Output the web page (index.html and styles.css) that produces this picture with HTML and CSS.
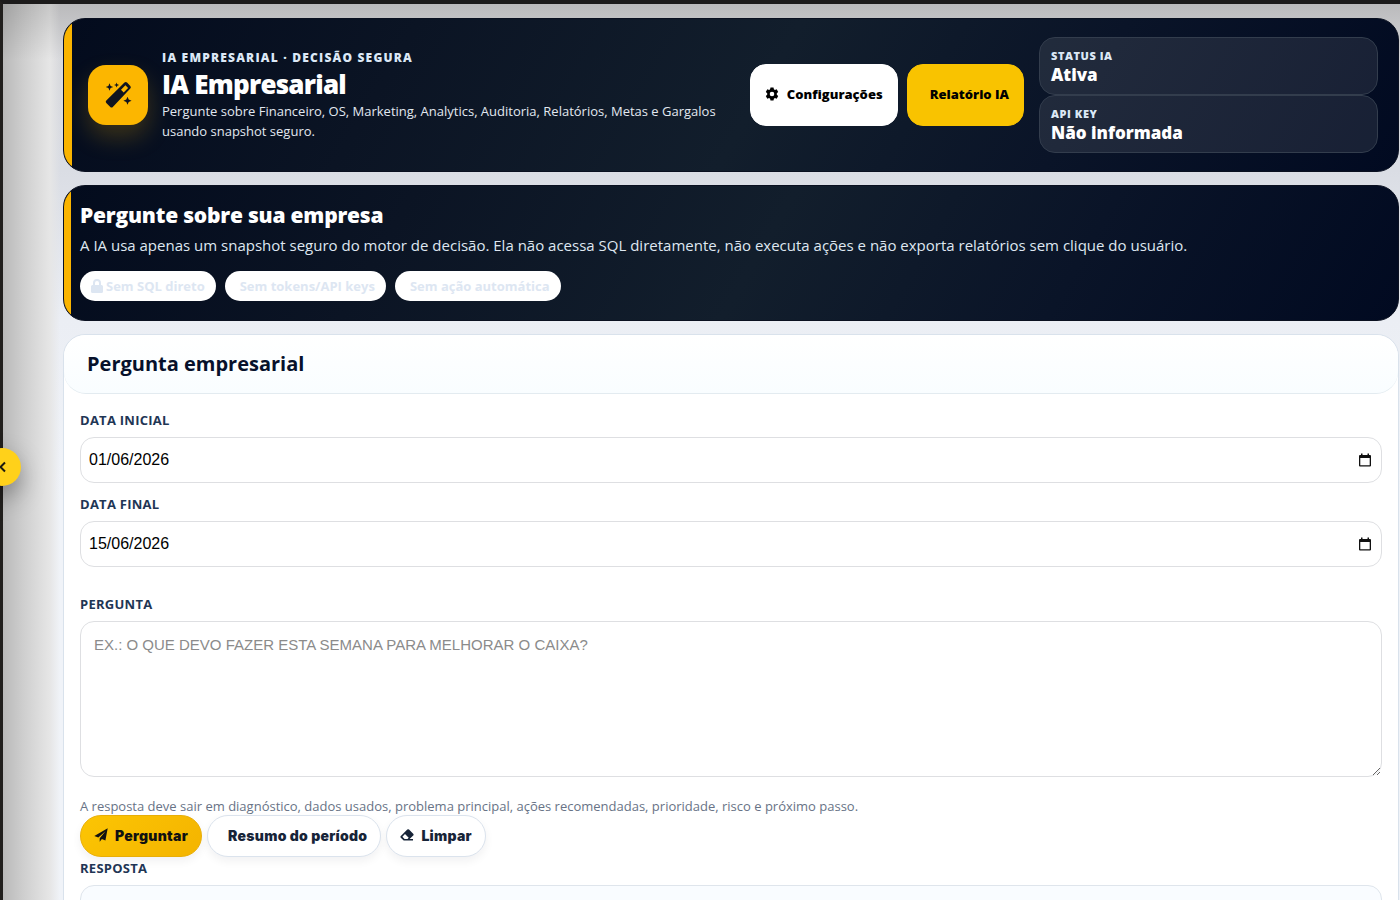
FILE: index.html
```html
<!DOCTYPE html>
<html lang="pt-BR">
<head>
  <meta charset="UTF-8" />
  <meta name="viewport" content="width=device-width, initial-scale=1.0" />
  <title>IA Empresarial</title>
  <link rel="stylesheet" href="styles.css">
</head>
<body>
  <button class="sidebar-toggle" type="button" aria-label="Abrir menu">
    <svg viewBox="0 0 10 12" width="10" height="12" fill="none" stroke="currentColor" stroke-width="2"><path d="M8 1.500 3.500 6 8 10.500"/></svg>
  </button>

  <main class="page">
    <header class="hero">
      <div class="hero-icon">
        <svg viewBox="0 0 28 28" width="28" height="28" fill="currentColor">
          <path fill-rule="evenodd" d="M20.500 1.600a1.800 1.800 0 0 1 2.500 0l3.300 3.300a1.800 1.800 0 0 1 0 2.500L8.800 25.900a1.800 1.800 0 0 1-2.500 0l-4-4a1.800 1.800 0 0 1 0-2.500ZM21.400 4.300l-4.400 4.400 2.700 2.700 4.400-4.400Z"/>
          <path d="m5.500 2.200 1.100 2.700 2.700 1.100-2.700 1.100-1.100 2.700-1.100-2.700L1.700 6l2.700-1.100ZM12.600 1.500l.7 1.800 1.800.7-1.800.7-.7 1.800-.7-1.800-1.800-.7 1.800-.7Zm10.900 14.200 1.200 2.900 2.900 1.100-2.900 1.200-1.200 2.900-1.200-2.900-2.900-1.200 2.900-1.100Z"/>
        </svg>
      </div>
      <div class="hero-text">
        <span class="kicker">IA EMPRESARIAL · DECISÃO SEGURA</span>
        <h1>IA Empresarial</h1>
        <p>Pergunte sobre Financeiro, OS, Marketing, Analytics, Auditoria, Relatórios, Metas e Gargalos usando snapshot seguro.</p>
      </div>
      <div class="hero-actions">
        <a class="hero-btn" href="#configuracoes">
          <svg viewBox="0 0 14 14" width="14" height="14"><path fill="currentColor" fill-rule="evenodd" d="M5.500.5h3l.4 1.800 1 .6 1.800-.6 1.500 2.600-1.400 1.300v1.600l1.400 1.300-1.500 2.600-1.800-.6-1 .6-.4 1.800h-3l-.4-1.800-1-.6-1.800.6L.8 9.100l1.400-1.300V6.200L.8 4.900l1.500-2.600 1.800.6 1-.6ZM7 4.700a2.300 2.300 0 1 0 0 4.600 2.300 2.300 0 0 0 0-4.600Z"/></svg>
          Configurações
        </a>
        <a class="hero-btn hero-btn-primary" href="#relatorio"><i class="no-icon"></i>Relatório IA</a>
      </div>
      <div class="hero-status">
        <div class="status-card"><span>STATUS IA</span><strong>Ativa</strong></div>
        <div class="status-card"><span>API KEY</span><strong>Não informada</strong></div>
      </div>
    </header>

    <section class="intro">
      <h2>Pergunte sobre sua empresa</h2>
      <p>A IA usa apenas um snapshot seguro do motor de decisão. Ela não acessa SQL diretamente, não executa ações e não exporta relatórios sem clique do usuário.</p>
      <div class="chips">
        <span class="chip">
          <svg viewBox="0 0 12 14" width="12" height="14" fill="currentColor"><path fill-rule="evenodd" d="M2 6V4a4 4 0 0 1 8 0v2h.500A1.500 1.500 0 0 1 12 7.500v5a1.500 1.500 0 0 1-1.500 1.500h-9A1.500 1.500 0 0 1 0 12.500v-5A1.500 1.500 0 0 1 1.500 6Zm2 0h4V4a2 2 0 0 0-4 0Z"/></svg>Sem SQL direto
        </span>
        <span class="chip chip-blank">Sem tokens/API keys</span>
        <span class="chip chip-blank">Sem ação automática</span>
      </div>
    </section>

    <section class="panel">
      <div class="panel-head"><h2>Pergunta empresarial</h2></div>
      <form class="panel-body">
        <label for="dataInicial">DATA INICIAL</label>
        <div class="date-field">
          <input id="dataInicial" type="text" inputmode="numeric" value="01/06/2026">
          <button type="button" aria-label="Escolher data inicial">
            <svg viewBox="0 0 14 14" width="14" height="14" fill="currentColor"><path fill-rule="evenodd" d="M3 .5h1.500V2h5V.5H11V2h1a1 1 0 0 1 1 1v9.500a1 1 0 0 1-1 1H2a1 1 0 0 1-1-1V3a1 1 0 0 1 1-1h1ZM2.300 5v7.200h9.400V5Z"/></svg>
          </button>
        </div>
        <label for="dataFinal">DATA FINAL</label>
        <div class="date-field">
          <input id="dataFinal" type="text" inputmode="numeric" value="15/06/2026">
          <button type="button" aria-label="Escolher data final">
            <svg viewBox="0 0 14 14" width="14" height="14" fill="currentColor"><path fill-rule="evenodd" d="M3 .5h1.500V2h5V.5H11V2h1a1 1 0 0 1 1 1v9.500a1 1 0 0 1-1 1H2a1 1 0 0 1-1-1V3a1 1 0 0 1 1-1h1ZM2.300 5v7.200h9.400V5Z"/></svg>
          </button>
        </div>
        <label class="question-label" for="pergunta">PERGUNTA</label>
        <textarea id="pergunta" placeholder="EX.: O QUE DEVO FAZER ESTA SEMANA PARA MELHORAR O CAIXA?"></textarea>
        <p class="hint">A resposta deve sair em diagnóstico, dados usados, problema principal, ações recomendadas, prioridade, risco e próximo passo.</p>
        <div class="form-actions">
          <button class="btn btn-primary" type="submit">
            <svg viewBox="0 0 14 14" width="14" height="14" fill="currentColor"><path d="M13.700.3 11.400 12.600 7.900 11.100 5.700 13.700V10.200L11.500 3.200 4.300 9.500.3 7.900Z"/></svg>
            Perguntar
          </button>
          <button class="btn" type="button"><i class="no-icon"></i>Resumo do período</button>
          <button class="btn" type="reset">
            <svg viewBox="0 0 14 14" width="14" height="14" fill="currentColor"><path fill-rule="evenodd" d="M7.300 1.600a1.200 1.200 0 0 1 1.700 0l4.200 4.200a1.200 1.200 0 0 1 0 1.700L9.600 11.100H13v1.500H3.700L.8 9.700a1.200 1.200 0 0 1 0-1.700ZM5 6.100 2.400 8.800l2.200 2.300h2.900l1.200-1.300Z"/></svg>
            Limpar
          </button>
        </div>
        <label class="answer-label" for="resposta">RESPOSTA</label>
        <output class="answer" id="resposta"></output>
      </form>
    </section>
  </main>
</body>
</html>
```
FILE: styles.css
```css
* {
  box-sizing: border-box;
}

body {
  margin: 0;
  min-height: 100vh;
  overflow-x: hidden;
  border-top: 4px solid #1c1b1b;
  border-left: 3px solid #211f1d;
  font-family: "Open Sans", "Noto Sans", sans-serif;
  color: #07112b;
  background:
    linear-gradient(to bottom, rgba(0, 0, 0, 0.14), transparent 60px) 0 0 / 100% 60px no-repeat,
    linear-gradient(to right, #b6b6b6, #cfcfcf 24px, #e6e6e6 50px, rgba(230, 232, 236, 0) 60px),
    linear-gradient(to bottom, #d6d6d8, #dadde4 170px, #ebeef4 320px, #f0f3f8 500px);
}

h1, h2, p {
  margin: 0;
}

svg {
  display: block;
  flex: none;
}

.page {
  padding: 14px 1px 24px 60px;
}

.sidebar-toggle {
  position: fixed;
  left: -17px;
  top: 448px;
  z-index: 2;
  display: flex;
  align-items: center;
  justify-content: flex-end;
  width: 38px;
  height: 38px;
  padding: 0 14px 0 0;
  border: 0;
  border-radius: 50%;
  color: #1b1a10;
  background: #ffd11a;
  box-shadow: 0 10px 24px rgba(0, 0, 0, 0.35);
}

/* Dark cards at the top */
.hero, .intro {
  position: relative;
  overflow: hidden;
  border: 1px solid #0a1020;
  border-radius: 22px;
  color: #fff;
  background: linear-gradient(120deg, #030b1d, #0b1424 25%, #121e2c 52%, #0a1428 75%, #010a21);
}

.hero::before, .intro::before {
  content: "";
  position: absolute;
  left: 0;
  top: 0;
  bottom: 0;
  width: 8px;
  background: #fab400;
}

.hero {
  display: flex;
  align-items: center;
  gap: 14px;
  min-height: 154px;
  padding: 17px 20px 18px 24px;
}

.hero-icon {
  display: flex;
  align-items: center;
  justify-content: center;
  flex: none;
  width: 60px;
  height: 60px;
  border-radius: 18px;
  color: #10141f;
  background: #fcb600;
  box-shadow: 0 12px 24px rgba(250, 180, 0, 0.22);
}

.hero-text {
  flex: 1;
  min-width: 0;
}

.kicker {
  display: block;
  font-size: 12px;
  line-height: 18px;
  font-weight: 800;
  letter-spacing: 0.1em;
  color: #dce8f6;
}

.hero h1 {
  font-size: 26px;
  line-height: 34px;
  font-weight: 800;
  letter-spacing: -0.03em;
}

.hero p {
  font-size: 13px;
  line-height: 20px;
  color: #e2e8f0;
}

.hero-actions {
  display: flex;
  gap: 9px;
  margin-right: 1px;
}

.hero-btn {
  display: flex;
  align-items: center;
  gap: 8px;
  height: 62px;
  padding: 0 14px 2px;
  border: 1px solid #fff;
  border-radius: 16px;
  font-size: 13px;
  font-weight: 800;
  white-space: nowrap;
  text-decoration: none;
  color: #000;
  background: #fff;
}

.hero-btn-primary {
  border-color: #f9c300;
  background: #f9c300;
}

.no-icon {
  width: 0;
}

.hero-status {
  flex: none;
  width: 339px;
}

.status-card {
  padding: 10px 11px 8px;
  border: 1px solid #333d4d;
  border-radius: 16px;
  background: rgba(255, 255, 255, 0.09);
}

.status-card span {
  display: block;
  font-size: 11px;
  line-height: 16px;
  font-weight: 800;
  letter-spacing: 0.05em;
  color: #dce8f6;
}

.status-card strong {
  display: block;
  font-size: 17px;
  line-height: 22px;
  font-weight: 800;
}

.intro {
  margin-top: 13px;
  padding: 14px 16px 19px;
}

.intro::before {
  width: 7px;
}

.intro h2 {
  font-size: 21px;
  line-height: 30px;
  font-weight: 800;
  letter-spacing: -0.01em;
}

.intro p {
  margin-top: 3px;
  font-size: 15px;
  line-height: 24px;
  color: #dfe7f1;
}

.chips {
  display: flex;
  flex-wrap: wrap;
  gap: 9px;
  margin-top: 14px;
}

.chip {
  display: flex;
  align-items: center;
  gap: 3px;
  height: 30px;
  padding: 0 11px;
  border-radius: 15px;
  font-size: 13px;
  font-weight: 700;
  color: #dde6f2;
  background: #fff;
}

.chip-blank {
  padding-left: 15px;
}

/* Question form */
.panel {
  margin-top: 13px;
  border: 1px solid #d9e2ec;
  border-radius: 22px;
  background: #fff;
}

.panel-head {
  padding: 14px 23px;
  border-bottom: 1px solid #e3ebf0;
  border-radius: 22px;
  background: linear-gradient(#fff, #f9fdff);
}

.panel-head h2 {
  font-size: 20px;
  line-height: 30px;
  font-weight: 700;
}

.panel-body {
  padding: 17px 16px 16px;
}

.panel-body label {
  display: block;
  margin-bottom: 8px;
  font-size: 13px;
  line-height: 18px;
  font-weight: 700;
  letter-spacing: 0.02em;
  color: #1f3655;
}

.date-field {
  display: flex;
  align-items: center;
  height: 46px;
  margin-bottom: 12px;
  padding: 0 9px 0 8px;
  border: 1px solid #dedfe2;
  border-radius: 14px;
  background: #fff;
}

.date-field input {
  flex: 1;
  min-width: 0;
  padding: 0;
  border: 0;
  outline: 0;
  font: 16px "Liberation Sans", Arial, sans-serif;
  color: #000;
  background: none;
}

.date-field button {
  padding: 0;
  border: 0;
  color: #111;
  background: none;
}

.panel-body .question-label {
  margin-top: 28px;
}

.panel-body .answer-label {
  margin-top: 2px;
}

.panel-body textarea {
  display: block;
  width: 100%;
  height: 156px;
  padding: 13px;
  border: 1px solid #dedfe2;
  border-radius: 14px;
  font: 15px/19px "Liberation Sans", Arial, sans-serif;
  resize: vertical;
}

.panel-body textarea::placeholder {
  color: #8b8b8b;
}

.hint {
  margin-top: 20px;
  font-size: 13px;
  line-height: 18px;
  color: #687386;
}

.form-actions {
  display: flex;
  gap: 5px;
}

.btn {
  display: flex;
  align-items: center;
  gap: 7px;
  height: 42px;
  padding: 0 13px 2px;
  border: 1px solid #dbe3ed;
  border-radius: 21px;
  font-family: Inter, Arial, sans-serif;
  font-size: 14px;
  font-weight: 900;
  letter-spacing: 0.02em;
  color: #172438;
  background: #fff;
  box-shadow: 0 4px 10px rgba(15, 23, 42, 0.06);
}

.btn-primary {
  border-color: #e8ae08;
  color: #111;
  background: linear-gradient(135deg, #fcc503, #f4b400);
}

.answer {
  display: block;
  min-height: 120px;
  border: 1px solid #dfe5ec;
  border-radius: 14px;
  background: #f9fcff;
}
```
